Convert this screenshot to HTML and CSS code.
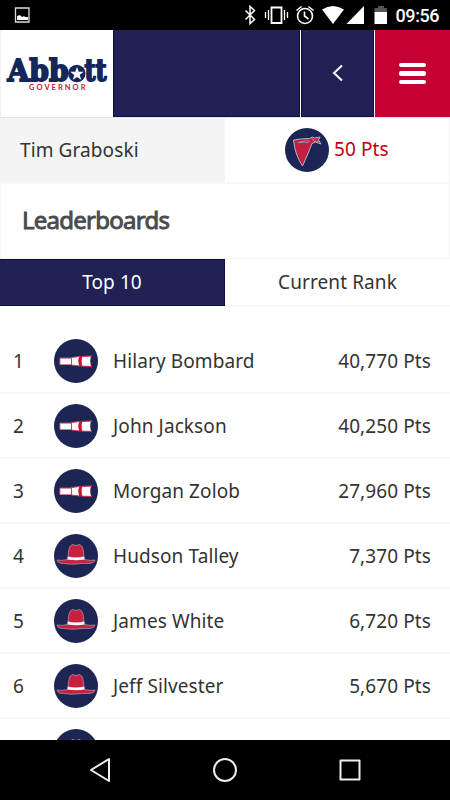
FILE: index.html
```html
<!DOCTYPE html>
<html lang="en">
<head>
    <meta charset="UTF-8">
    <meta name="viewport" content="width=device-width, initial-scale=1.0">
    <title>Leaderboards</title>
    <link rel="stylesheet" href="styles.css">
</head>
<body>
    <svg class="defs" width="0" height="0">
        <symbol id="spyglass" viewBox="0 0 44 44">
            <circle cx="22" cy="22" r="22" fill="#1c2553"/>
            <path d="M6 19.200h11.500v6.300H6z" fill="#fff" stroke="#d27a90" stroke-width="1"/>
            <path d="M17.500 18.500l8.500-1v9.500l-8.500-1z" fill="#fff" stroke="#d0405f" stroke-width="1"/>
            <path d="M27 17.500l10.500-.5v10.500L27 27z" fill="#fff" stroke="#c9304f" stroke-width="1.200"/>
            <path d="M25.500 17.500h3q-2.500 4.500 0 9.500h-3q-2.500-5 0-9.500z" fill="#d0102e"/>
            <path d="M36.800 18q-1.200 4 0 8.500h1.200V18z" fill="#1c2553"/>
        </symbol>
        <symbol id="hat" viewBox="0 0 44 44">
            <circle cx="22" cy="22" r="22" fill="#1c2553"/>
            <path d="M3 26q5 1 10.500-.5L15 15q1-4 3.500-4.500l3.500 1 3.500-1q2.500.5 3.500 4.500l1.500 10.500Q36 27 41 26q-.5 3-6 3.500-6-.5-12.500.5-6.500.5-13-.5Q3.500 29.500 3 26z" fill="#c8203f" stroke="#b49db5" stroke-width=".7" stroke-linejoin="round"/>
            <path d="M14 22.500q8 1.800 16 0l.5 3q-8 1.500-17 0z" fill="#fff"/>
        </symbol>
        <symbol id="bandana" viewBox="0 0 44 44">
            <circle cx="22" cy="22" r="22" fill="#1c2553"/>
            <path d="M8.500 12q8-1.500 16-1.500l3-1.500 2 1 5.500-1-1.500 3 2.500 4-5.500-2-3.500 1.500q-3 8-9.500 22.500Q10 27 8.500 12z" fill="#c51f40" stroke="#a9b9ce" stroke-width="1" stroke-linejoin="round"/>
            <path d="M13.500 14.500q6-2 11-1.500l-1.500 1.500q-5-.5-9.500 0z" fill="#1c2553" stroke="#a9b9ce" stroke-width=".7"/>
            <path d="M27 10.500l2.500 3 4-.5" fill="none" stroke="#a9b9ce" stroke-width=".8"/>
        </symbol>
    </svg>

    <div class="statusbar">
        <svg width="450" height="30" viewBox="0 0 450 30">
            <path d="M15.500 8h13.500v14H15.500z" fill="none" stroke="#ddd" stroke-width="1.300"/>
            <path d="M17 20v-3.500q1.500-2 3.500-1l1.500 1.500q2-1.500 3.500 0H28v3z" fill="#fff"/>
            <path d="M245.500 10.500l9 9-4.500 4V6.500l4.500 4-9 9" fill="none" stroke="#fff" stroke-width="1.500"/>
            <path d="M271.500 7.500h10v15.500h-10z" fill="none" stroke="#fff" stroke-width="1.800"/>
            <path d="M268.500 10v10M265.500 12v6M284.500 10v10M287.500 12v6" fill="none" stroke="#fff" stroke-width="1.300"/>
            <g fill="none" stroke="#fff" stroke-width="1.600">
                <circle cx="305" cy="16" r="7.500"/>
                <path d="M304.500 11.500V16l4 3M296.500 10.500l5-4M308.500 6.500l5 4"/>
            </g>
            <path d="M322 9.500q11-7 22 0L333 24z" fill="#fff"/>
            <path d="M346.500 24L364 6v18z" fill="#fff"/>
            <path d="M374.500 12V8h3.500V6h6v2h3v4z" fill="#555"/>
            <path d="M374.500 12H387v12h-12.500z" fill="#fff"/>
            <text x="395.500" y="22" textLength="44" class="clock">09:56</text>
        </svg>
    </div>

    <div class="header">
        <div class="logo">
            <svg width="112" height="87" viewBox="0 30 112 87">
                <g class="brand">
                    <text x="7.500" y="80.500" textLength="61" lengthAdjust="spacingAndGlyphs">Abb</text>
                    <text x="84.500" y="80.500" textLength="22" lengthAdjust="spacingAndGlyphs">tt</text>
                </g>
                <circle cx="76.800" cy="73.500" r="8.700" fill="#14265a"/>
                <path d="M77 67l1.700 4.700 5 .1-4 3.100 1.500 4.900-4.200-2.900-4.200 2.900 1.500-4.900-4-3.100 5-.1z" fill="#fff"/>
                <text x="29" y="90.200" textLength="56.500" class="office">GOVERNOR</text>
            </svg>
        </div>
        <div class="space"></div>
        <div class="back">
            <svg width="12" height="18" viewBox="0 0 12 18"><path d="M10 1.500L2 9l8 7.500" fill="none" stroke="#fff" stroke-width="2"/></svg>
        </div>
        <div class="menu">
            <span></span>
            <span></span>
            <span></span>
        </div>
    </div>

    <div class="user">
        <div class="username">Tim Graboski</div>
        <div class="points">
            <svg class="badge" width="44" height="44"><use href="#bandana"/></svg>
            <span>50 Pts</span>
        </div>
    </div>

    <h1>Leaderboards</h1>

    <div class="tabs">
        <div class="tab active">Top 10</div>
        <div class="tab">Current Rank</div>
    </div>

    <div class="list">
        <div class="row">
            <span class="rank">1</span>
            <svg class="badge" width="44" height="44"><use href="#spyglass"/></svg>
            <span class="name">Hilary Bombard</span>
            <span class="pts">40,770 Pts</span>
        </div>
        <div class="row">
            <span class="rank">2</span>
            <svg class="badge" width="44" height="44"><use href="#spyglass"/></svg>
            <span class="name">John Jackson</span>
            <span class="pts">40,250 Pts</span>
        </div>
        <div class="row">
            <span class="rank">3</span>
            <svg class="badge" width="44" height="44"><use href="#spyglass"/></svg>
            <span class="name">Morgan Zolob</span>
            <span class="pts">27,960 Pts</span>
        </div>
        <div class="row">
            <span class="rank">4</span>
            <svg class="badge" width="44" height="44"><use href="#hat"/></svg>
            <span class="name">Hudson Talley</span>
            <span class="pts">7,370 Pts</span>
        </div>
        <div class="row">
            <span class="rank">5</span>
            <svg class="badge" width="44" height="44"><use href="#hat"/></svg>
            <span class="name">James White</span>
            <span class="pts">6,720 Pts</span>
        </div>
        <div class="row">
            <span class="rank">6</span>
            <svg class="badge" width="44" height="44"><use href="#hat"/></svg>
            <span class="name">Jeff Silvester</span>
            <span class="pts">5,670 Pts</span>
        </div>
        <div class="row">
            <span class="rank"></span>
            <svg class="badge" width="44" height="44"><use href="#hat"/></svg>
        </div>
    </div>

    <div class="navbar">
        <svg width="450" height="60" viewBox="0 740 450 60">
            <g fill="none" stroke="#eee" stroke-width="2" stroke-linejoin="round">
                <path d="M109 759v22l-18-11z"/>
                <circle cx="225" cy="770" r="11"/>
                <path d="M340.500 760.500h19v19h-19z"/>
            </g>
        </svg>
    </div>
</body>
</html>
```
FILE: styles.css
```css
*{
    box-sizing: border-box;
}
body {
    margin: 0;
    width: 450px;
    height: 800px;
    overflow: hidden;
    display: flex;
    flex-direction: column;
    background: #fff;
    color: #333;
    font-family: "Noto Sans", sans-serif;
    font-size: 19px;
    letter-spacing: 0.1px;
}
svg {
    display: block;
    flex: none;
    letter-spacing: 0;
}
.defs{
    position: absolute;
}
.statusbar {
    height: 30px;
    background: #000;
}
.clock{
    font: 500 18px Roboto, sans-serif;
    fill: #fff;
}

.header{
    display: flex;
    height: 88px;
    border-bottom: 1px solid #e4e4ec;
}
.logo{
    width: 113px;
    border-left: 1px solid #f0f0f0;
}
.logo svg{
    margin-left: -1px;
}
.brand{
    font: bold 29px "DejaVu Serif", serif;
    fill: #14265a;
    stroke: #14265a;
    stroke-width: 1.8px;
}
.office{
    font: bold 7.5px Lato, sans-serif;
    fill: #c8203f;
}
.space{
    flex: 1;
    background: #212155;
    border: 1px solid #0c0c48;
    border-top: none;
}
.back, .menu{
    display: flex;
    align-items: center;
    justify-content: center;
    margin-left: 1px;
}
.back{
    width: 73px;
    background: #212155;
    border: 1px solid #0c0c48;
    border-top: none;
}
.menu{
    width: 75px;
    flex-direction: column;
    gap: 4px;
    background: #c60032;
}
.menu span{
    width: 27px;
    height: 4.5px;
    border-radius: 2px;
    background: #fff;
}

.user {
    display: flex;
    height: 66px;
    border-bottom: 2px solid #f7f7f7;
}
.username, .points{
    width: 225px;
    display: flex;
    align-items: center;
}
.username{
    padding-left: 20px;
    background: #f4f4f4;
}
.points{
    padding-left: 60px;
    gap: 5px;
    color: #c2000e;
    border-right: 1px solid #f4f4f4;
}
.points span{
    margin-top: -2px;
}

h1 {
    margin: 0;
    height: 75px;
    padding-left: 21px;
    line-height: 71px;
    font-size: 24px;
    font-weight: 400;
    letter-spacing: -0.75px;
    color: #4b4b4b;
    -webkit-text-stroke: 0.9px #4b4b4b;
    border: 1px solid #f4f4f4;
    border-top: none;
}

.tabs {
    display: flex;
    height: 48px;
}
.tab{
    width: 225px;
    line-height: 46px;
    text-align: center;
    border-bottom: 2px solid #f7f7f7;
}
.tab.active{
    height: 47px;
    background: #212155;
    color: #fff;
    border: 1px solid #0c0c48;
    border-left: none;
    line-height: 44px;
}

.list{
    flex: 1;
    overflow: hidden;
    padding-top: 22px;
}
.row{
    display: flex;
    align-items: center;
    height: 65px;
    padding: 0 19px 0 13px;
    border-bottom: 2px solid #f7f7f7;
}
.rank{
    width: 41px;
}
.name{
    margin-left: 15px;
}
.pts{
    margin-left: auto;
}

.navbar{
    height: 60px;
    background: #000;
}
```
